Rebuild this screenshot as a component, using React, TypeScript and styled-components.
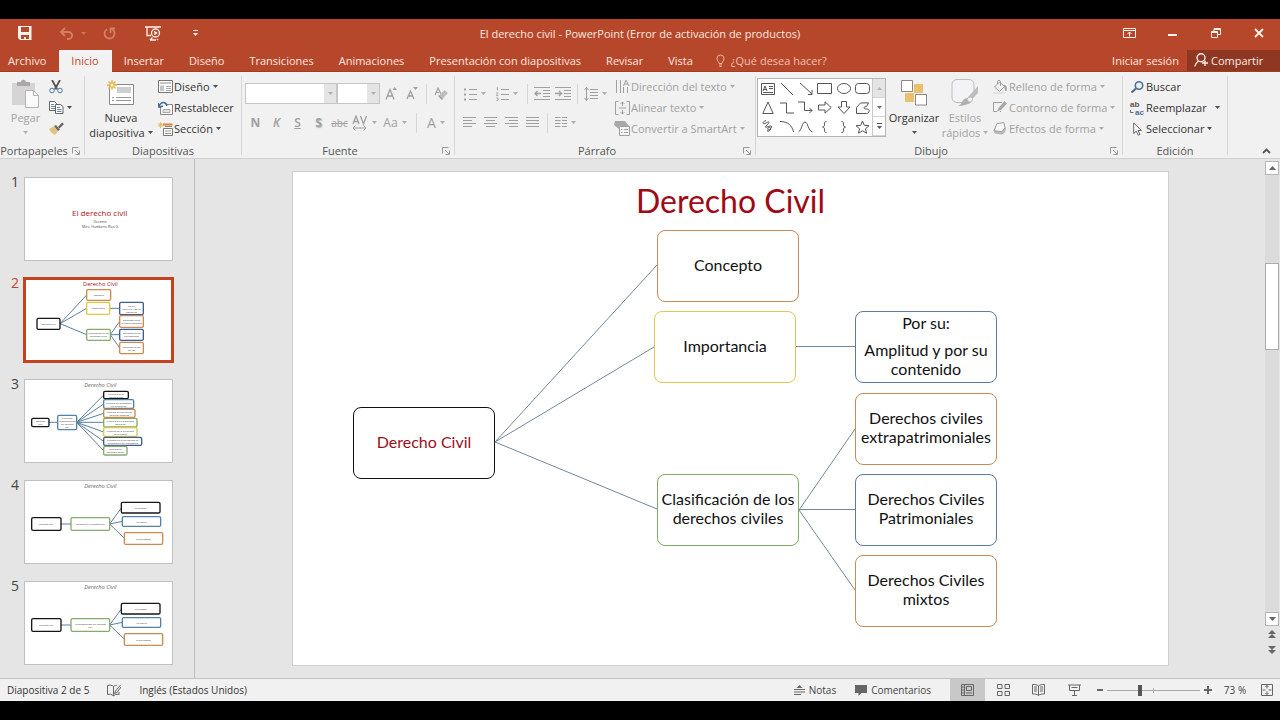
import React from "react";
import styled, { createGlobalStyle, css } from "styled-components";

const GlobalStyle = createGlobalStyle`
  *, *::before, *::after { box-sizing: border-box; }
  body {
    margin: 0;
    background: #000;
    font-family: "Open Sans", "Noto Sans", sans-serif;
    font-size: 11px;
    color: #333;
  }
  button, input, select { font: inherit; color: inherit; }
  button { border: 0; padding: 0; margin: 0; background: none; cursor: pointer; }
  svg { display: block; flex: none; }
`;

/* ---------- frame ---------- */

const Screen = styled.div`
  display: flex;
  flex-direction: column;
  height: 100vh;
  padding: 19px 0;
  background: #000;
  overflow: hidden;
`;

const TitleBar = styled.header`
  display: grid;
  grid-template-columns: 1fr auto 1fr;
  align-items: center;
  height: 28px;
  flex: none;
  background: #b7472a;
  color: #fbe9e2;
`;

const QuickAccess = styled.div`
  display: flex;
  align-items: center;
  padding-left: 8px;
`;

const QuickButton = styled.button<{ $width: number; $dim?: boolean }>`
  display: flex;
  align-items: center;
  justify-content: center;
  gap: 7px;
  width: ${(p) => p.$width}px;
  height: 24px;
  color: ${(p) => (p.$dim ? "#d47f68" : "#fff3ec")};
`;

const WindowTitle = styled.h1`
  margin: 0;
  padding-top: 1px;
  font-size: 11px;
  font-weight: 400;
  white-space: nowrap;
`;

const WindowButtons = styled.div`
  display: flex;
  justify-content: flex-end;
`;

const WindowButton = styled.button`
  display: flex;
  align-items: center;
  justify-content: center;
  width: 43px;
  height: 28px;
  color: #fff3ec;
`;

const TabBar = styled.nav`
  display: flex;
  height: 25px;
  flex: none;
  padding-top: 3px;
  background: #b7472a;
  border-bottom: 1px solid #a03c22;
  color: #fbe9e2;
`;

const Tab = styled.button<{ $active?: boolean; $first?: boolean }>`
  height: 21px;
  padding: 0 13px 1px 12px;
  white-space: nowrap;
  ${(p) => p.$first && css`padding-left: 8px;`}
  ${(p) => p.$active && css`height: 22px; padding-bottom: 2px; background: #f3f2f2; color: #c04a2c;`}
`;

const TellMe = styled.label`
  display: flex;
  align-items: center;
  gap: 6px;
  padding: 0 0 1px 10px;
  color: #e9b5a4;
`;

const TellMeInput = styled.input`
  width: 120px;
  padding: 0;
  border: 0;
  outline: 0;
  background: none;
  &::placeholder { color: #eec0b1; opacity: 1; }
`;

const Account = styled.div`
  display: flex;
  margin-left: auto;
`;

const SignIn = styled.button`
  padding: 0 8px 1px;
  white-space: nowrap;
`;

const Share = styled.button`
  display: flex;
  align-items: center;
  gap: 3px;
  width: 93px;
  padding: 0 0 1px 7px;
  background: #8e3823;
`;

/* ---------- ribbon ---------- */

const Ribbon = styled.section`
  display: flex;
  height: 87px;
  flex: none;
  background: #f1f1f1;
  border-bottom: 1px solid #cfcfcf;
  overflow: hidden;
`;

const Group = styled.div<{ $width: number }>`
  display: flex;
  flex-direction: column;
  flex: none;
  width: ${(p) => p.$width}px;
  padding-top: 4px;
`;

const GroupDivider = styled.div`
  width: 1px;
  margin: 4px 0 3px;
  flex: none;
  background: #d6d6d6;
`;

const GroupBody = styled.div<{ $pad?: number }>`
  display: flex;
  flex: 1;
  padding-left: ${(p) => p.$pad ?? 0}px;
`;

const GroupFooter = styled.div`
  display: flex;
  align-items: center;
  height: 15px;
  color: #555;
`;

const GroupName = styled.span`
  flex: 1;
  text-align: center;
  line-height: 15px;
`;

const Launcher = styled.button`
  display: flex;
  justify-content: center;
  width: 16px;
  color: #999;
`;

const Stack = styled.div<{ $top?: number; $gap?: number; $left?: number }>`
  display: flex;
  flex-direction: column;
  padding-top: ${(p) => p.$top ?? 0}px;
  margin-left: ${(p) => p.$left ?? 0}px;
  gap: ${(p) => p.$gap ?? 0}px;
`;

const Row = styled.div`
  display: flex;
  align-items: center;
  height: 21px;
`;

const BigButton = styled.button<{ $width: number; $dim?: boolean }>`
  display: flex;
  flex-direction: column;
  align-items: center;
  justify-content: flex-start;
  width: ${(p) => p.$width}px;
  height: 67px;
  line-height: 15px;
  white-space: nowrap;
  color: ${(p) => (p.$dim ? "#a3a3a3" : "#333")};
`;

const BigIcon = styled.span`
  display: flex;
  align-items: center;
  justify-content: center;
  height: 34px;
`;

const LabelLine = styled.span`
  display: flex;
  align-items: center;
  justify-content: center;
  gap: 3px;
  height: 15px;
`;

const SmallButton = styled.button<{ $dim?: boolean; $spread?: boolean }>`
  display: flex;
  align-items: center;
  gap: ${(p) => (p.$spread ? 8 : 3)}px;
  height: 21px;
  padding-left: 1px;
  white-space: nowrap;
  color: ${(p) => (p.$dim ? "#a0a0a0" : "#333")};
`;

const SmallLabel = styled.span`
  display: flex;
  align-items: center;
  gap: 1px;
`;

const IconSlot = styled.span`
  display: flex;
  align-items: center;
  justify-content: center;
  width: 16px;
  height: 16px;
`;

const Tool = styled.button<{ $width?: number }>`
  display: flex;
  align-items: center;
  justify-content: center;
  gap: 4px;
  width: ${(p) => p.$width ?? 21}px;
  height: 21px;
  color: #a0a0a0;
`;

const ToolDivider = styled.span`
  width: 1px;
  height: 20px;
  margin: 0 3px 0 4px;
  background: #d6d6d6;
`;

const Glyph = styled.span<{ $kind?: "bold" | "italic" | "underline" | "shadow" | "strike" | "large" }>`
  font-size: 12px;
  ${(p) => p.$kind === "bold" && css`font-weight: 700;`}
  ${(p) => p.$kind === "italic" && css`font-style: italic; font-weight: 600;`}
  ${(p) => p.$kind === "underline" && css`text-decoration: underline; font-weight: 600;`}
  ${(p) => p.$kind === "shadow" && css`font-weight: 700; text-shadow: 1px 1px 1px #bbb;`}
  ${(p) => p.$kind === "strike" && css`font-size: 10px; text-decoration: line-through;`}
  ${(p) => p.$kind === "large" && css`font-size: 14px;`}
`;

const Combo = styled.label<{ $width: number }>`
  display: flex;
  position: relative;
  width: ${(p) => p.$width}px;
  height: 21px;
  border: 1px solid #c6c6c6;
  background: linear-gradient(to left, #e4e4e4 12px, #fff 12px);
  color: #a6a6a6;
`;

const ComboSelect = styled.select`
  flex: 1;
  min-width: 0;
  appearance: none;
  border: 0;
  outline: 0;
  background: none;
`;

const ComboCaret = styled.span`
  position: absolute;
  right: 3px;
  top: 8px;
  pointer-events: none;
`;

const Gallery = styled.div`
  display: flex;
  height: 59px;
  margin: 2px 0 0 1px;
  border: 1px solid #b5b5b5;
  background: #fff;
  color: #555;
`;

const ShapeGrid = styled.div`
  display: grid;
  grid-template-columns: repeat(6, 19px);
  grid-auto-rows: 19px;
`;

const ShapeButton = styled.button`
  display: flex;
  align-items: center;
  justify-content: center;
`;

const GalleryScroll = styled.div`
  display: grid;
  grid-template-rows: repeat(3, 19px);
  width: 13px;
  border-left: 1px solid #c9c9c9;
`;

const GalleryArrow = styled.button<{ $off?: boolean }>`
  display: flex;
  align-items: center;
  justify-content: center;
  border-bottom: 1px solid #d5d5d5;
  background: ${(p) => (p.$off ? "#e4e4e4" : "#fff")};
  color: ${(p) => (p.$off ? "#b5b5b5" : "#555")};
`;

const Collapse = styled.button`
  align-self: flex-end;
  margin: 0 9px 0 auto;
  height: 14px;
  color: #555;
`;

/* ---------- workspace ---------- */

const Workspace = styled.main`
  display: flex;
  flex: 1;
  min-height: 0;
  background: #e6e5e6;
`;

const ThumbPanel = styled.ol`
  display: flex;
  flex-direction: column;
  gap: 17px;
  flex: none;
  width: 195px;
  margin: 0;
  padding: 18px 0 0;
  list-style: none;
  border-right: 1px solid #bdbdbd;
  overflow: hidden;
`;

const ThumbItem = styled.li<{ $selected?: boolean }>`
  display: flex;
  height: 84px;
  flex: none;
  color: ${(p) => (p.$selected ? "#c0492b" : "#444")};
`;

const ThumbNumber = styled.span`
  width: 24px;
  padding-left: 11px;
  font-size: 14px;
  line-height: 10px;
`;

const ThumbButton = styled.button<{ $selected?: boolean }>`
  width: 149px;
  height: 84px;
  background: #fff;
  border: 1px solid ${(p) => (p.$selected ? "#c5421f" : "#c0c0c0")};
  ${(p) => p.$selected && css`box-shadow: 0 0 0 1px #c5421f, inset 0 0 0 1px #c5421f;`}
`;

const Stage = styled.div`
  display: flex;
  align-items: center;
  justify-content: center;
  flex: 1;
  min-width: 0;
  padding-left: 1px;
  overflow: hidden;
`;

const Slide = styled.article`
  position: relative;
  flex: none;
  width: 875px;
  height: 493px;
  background: #fff;
  box-shadow: 0 0 0 1px #d0d0d0;
  font-family: Lato, "Liberation Sans", sans-serif;
  color: #111;
`;

const SlideTitle = styled.h2`
  margin: 0;
  padding-top: 9px;
  font-size: 32px;
  line-height: 40px;
  font-weight: 400;
  text-align: center;
  color: #a00a14;
`;

const Connectors = styled.svg`
  position: absolute;
  left: 0;
  top: 0;
`;

const Node = styled.div<{ $x: number; $y: number; $color: string; $red?: boolean }>`
  position: absolute;
  left: ${(p) => p.$x}px;
  top: ${(p) => p.$y}px;
  display: flex;
  flex-direction: column;
  align-items: center;
  justify-content: center;
  width: 142px;
  height: 72px;
  padding-bottom: 4px;
  border: 1px solid ${(p) => p.$color};
  border-radius: 8px;
  background: #fff;
  color: ${(p) => (p.$red ? "#98101c" : "#111")};
  font-size: 16px;
  line-height: 19px;
  text-align: center;
  white-space: nowrap;
`;

const NodeLead = styled.span`
  margin-bottom: 8px;
`;

const ScrollBar = styled.div`
  display: flex;
  flex-direction: column;
  flex: none;
  width: 14px;
  margin: 2px 1px 20px 0;
`;

const ScrollArrow = styled.button<{ $plain?: boolean }>`
  display: flex;
  align-items: center;
  justify-content: center;
  height: 14px;
  flex: none;
  color: #666;
  ${(p) => !p.$plain && css`border: 1px solid #b5b5b5; background: #fff;`}
  ${(p) => p.$plain && css`height: 16px;`}
`;

const ScrollTrack = styled.div`
  display: flex;
  flex-direction: column;
  flex: 1;
  padding-top: 88px;
  background: #dcdbdc;
`;

const ScrollThumb = styled.button`
  height: 87px;
  border: 1px solid #ababab;
  background: #fff;
`;

/* ---------- status bar ---------- */

const StatusBar = styled.footer`
  display: flex;
  align-items: stretch;
  height: 23px;
  flex: none;
  padding-left: 7px;
  background: #f1f1f1;
  border-top: 1px solid #c2c2c2;
  color: #333;
  font-size: 10px;
`;

const StatusText = styled.span`
  display: flex;
  align-items: center;
  white-space: nowrap;
`;

const StatusButton = styled.button<{ $width?: number; $active?: boolean; $left?: number }>`
  display: flex;
  align-items: center;
  justify-content: center;
  ${(p) => p.$width && css`width: ${p.$width}px;`}
  margin-left: ${(p) => p.$left ?? 0}px;
  gap: 4px;
  background: ${(p) => (p.$active ? "#c8c8c8" : "transparent")};
  color: #444;
  svg { color: #666; }
`;

const StatusEnd = styled.div`
  display: flex;
  margin-left: auto;
`;

const ZoomRange = styled.input`
  width: 93px;
  height: 22px;
  margin: 0;
  appearance: none;
  background:
    linear-gradient(#a8a8a8, #a8a8a8) 50% 50% / 1px 5px no-repeat,
    linear-gradient(#a8a8a8, #a8a8a8) 50% 50% / 100% 1px no-repeat;
  &::-webkit-slider-thumb {
    appearance: none;
    width: 4px;
    height: 11px;
    background: #555;
  }
`;

/* ---------- icons ---------- */

type IconProps = { w: number; h: number; children: React.ReactNode; sw?: number };
const Icon = ({ w, h, children, sw = 1 }: IconProps) => (
  <svg width={w} height={h} viewBox={`0 0 ${w} ${h}`} fill="none" stroke="currentColor" strokeWidth={sw} aria-hidden="true">
    {children}
  </svg>
);

const Caret = () => (
  <Icon w={5} h={3}><path d="M0 0h5L2.500 3z" fill="currentColor" stroke="none" opacity=".85" /></Icon>
);
const CaretUp = () => (
  <Icon w={7} h={4}><path d="M0 4h7L3.500 0z" fill="currentColor" stroke="none" /></Icon>
);
const CaretDown = () => (
  <Icon w={7} h={4}><path d="M0 0h7L3.500 4z" fill="currentColor" stroke="none" /></Icon>
);
const LauncherIcon = () => (
  <Icon w={8} h={8}><path d="M.5 6.500v-6h6M3 3l4 4M7.500 3.500v4h-4" /></Icon>
);
const SaveIcon = () => (
  <Icon w={14} h={14}>
    <path d="M0 .5A.5.5 0 0 1 .5 0h13v14H2l-2-2z" fill="currentColor" stroke="none" />
    <path d="M3 1h8v5H3zM3 9h8v4H3z" fill="#b7472a" stroke="none" />
    <path d="M6 11h2v2H6z" fill="currentColor" stroke="none" />
  </Icon>
);
const UndoIcon = () => (
  <Icon w={15} h={13} sw={1.8}><path d="M6 1 2 5l4 4M2.500 5H9c6 0 5 7 0 7H8" /></Icon>
);
const RedoIcon = () => (
  <Icon w={13} h={13} sw={1.8}><path d="M4 2.200A5 5 0 1 0 9.500 2.500M7.500 6V1.500H12" /></Icon>
);
const PresentIcon = () => (
  <Icon w={16} h={15} sw={1.3}>
    <path d="M0 1h16M2 1v8.500h4M5 14l2.500-2.500M11 14h-6M12 13l1 1" />
    <circle cx="10.500" cy="7" r="4" />
    <path d="M9.300 4.800v4.400L12.800 7z" fill="currentColor" stroke="none" />
  </Icon>
);
const CustomizeIcon = () => (
  <Icon w={5} h={6}><path d="M0 .5h5" /><path d="M0 3h5L2.500 6z" fill="currentColor" stroke="none" /></Icon>
);
const RibbonOptionsIcon = () => (
  <Icon w={13} h={10}><path d="M.5.5h12v9H.5zM.5 2.500h12M6.500 8.500V4M4.500 6l2-2 2 2" /></Icon>
);
const MinimizeIcon = () => <Icon w={9} h={6}><path d="M0 4h9v2H0z" fill="currentColor" stroke="none" /></Icon>;
const RestoreIcon = () => (
  <Icon w={10} h={10}><path d="M.5 3.500h6v6h-6zM.5 4.500h6M3 3V.5h6.500v6H7M3 1.500h6.500" /></Icon>
);
const CloseIcon = () => <Icon w={10} h={10} sw={1.8}><path d="m1 1 8 8M9 1 1 9" /></Icon>;
const BulbIcon = () => (
  <Icon w={9} h={13}>
    <path d="M3 9.500C3 7.500 1 7 1 4.500a3.500 3.500 0 0 1 7 0C8 7 6 7.500 6 9.500zM3 11h3M3.500 12.500h2" />
  </Icon>
);
const PersonIcon = () => (
  <Icon w={14} h={14} sw={1.4}>
    <circle cx="7" cy="4.800" r="4" /><path d="M4.500 8C2.500 9.500 1 11 .8 13.500M8 10h6M11 7.500V13" />
  </Icon>
);
const PasteIcon = () => (
  <Icon w={27} h={29}>
    <path d="M0 4h23v8H13v14H0z" fill="#d6d4d4" stroke="none" />
    <path d="M5 3h4c0-3 5-3 5 0h4v4H5z" fill="#a9a9a9" stroke="none" />
    <path d="M13.500 11.500h8l5 5v12h-13z" fill="#fafafa" stroke="#b4b4b4" />
    <path d="M21.500 11.500v5h5" stroke="#b4b4b4" />
  </Icon>
);
const CutIcon = () => (
  <Icon w={14} h={14}>
    <path d="m3 0 5 9M11 0 6 9" stroke="#555" strokeWidth="1.800" />
    <circle cx="3" cy="10.500" r="2.300" stroke="#53789c" /><circle cx="11" cy="10.500" r="2.300" stroke="#53789c" />
    <path d="M5 9h4" stroke="#53789c" />
  </Icon>
);
const CopyIcon = () => (
  <Icon w={15} h={13}>
    <path d="M.5.5h5l2 2v7h-7z" fill="#fff" stroke="#666" /><path d="M2 3.500h3M2 5.500h4M2 7.500h4" stroke="#5f85a8" />
    <path d="M6.500 3.500h5l2.500 2v7H6.500z" fill="#fff" stroke="#666" /><path d="M8 6.500h3M8 8.500h4.500M8 10.500h4.500" stroke="#5f85a8" />
  </Icon>
);
const BrushIcon = () => (
  <Icon w={15} h={13}>
    <path d="m0 7 5-3 4 5-3 4c-2-1-5-3-6-6z" fill="#e2c47c" stroke="none" />
    <path d="m5 4 2-1 4 4.500L9 9z" fill="#6b6b6b" stroke="none" />
    <path d="m9 5 4-4.500L15 2l-4.500 4.500z" fill="#666" stroke="none" />
  </Icon>
);
const Burst = () => (
  <g stroke="#e6ba4e" strokeWidth="1.400">
    <circle cx="5" cy="5" r="2.200" fill="#fdf4d4" />
    <path d="M5 0v2M5 8v2M0 5h2M8 5h2M1.500 1.500 3 3M7 7l1.500 1.500M8.500 1.500 7 3M3 7 1.500 8.500" />
  </g>
);
const NewSlideIcon = () => (
  <Icon w={28} h={27}>
    <path d="M2.500 4.500h24v20h-24z" fill="#fff" stroke="#888" />
    <path d="M10 7h14v6H10z" fill="#cfcfcf" stroke="none" />
    <path d="M5 17.500h2M9 17.500h15M5 20.500h2M9 20.500h15" stroke="#999" />
    <Burst />
  </Icon>
);
const LayoutIcon = () => (
  <Icon w={15} h={13}>
    <path d="M.5.5h14v12H.5z" fill="#fff" stroke="#777" /><path d="M2 2h11v2H2zM2 5.500h4V11H2z" fill="#c4c4c4" stroke="none" />
    <path d="M8 6.500h5M8 8.500h5M8 10.500h5" stroke="#aaa" />
  </Icon>
);
const ResetIcon = () => (
  <Icon w={15} h={14}>
    <path d="M2.500 6v7.500h12v-10H9" fill="#fff" stroke="#888" /><path d="M5 8.500h7v3H5z" fill="#e2e2e2" stroke="#aaa" />
    <path d="M1 5.500C3 0 8 .5 9 5M0 2l1 4 4-.8" stroke="#426b99" strokeWidth="1.600" />
  </Icon>
);
const SectionIcon = () => (
  <Icon w={15} h={14}>
    <path d="M5 2.500h9.500" stroke="#d9823a" strokeWidth="2" /><path d="M5.500 6.500h9v7h-9z" fill="#fff" stroke="#777" />
    <path d="M7 9h6M7 11.500h6" stroke="#999" /><path d="M7 4.500h7" stroke="#888" />
    <path d="M2.500 0v6M0 3h5M.8 1l3.400 4M4.200 1 .8 5" stroke="#e6ba4e" strokeWidth=".9" />
  </Icon>
);
const GrowIcon = ({ down }: { down?: boolean }) => (
  <Icon w={12} h={13} sw={1.3}>
    {down ? <path d="m1 12 3.500-8L8 12M2.500 9h4" /> : <path d="M1 12.500 5 2.500l4 10M2.500 9h5" />}
    {down ? <path d="M7 0h5L9.500 3z" fill="currentColor" stroke="none" /> : <path d="M7.500 3h4.500L9.700 0z" fill="currentColor" stroke="none" />}
  </Icon>
);
const ClearFormatIcon = () => (
  <Icon w={14} h={13} sw={1.2}>
    <path d="m1 8 3-7 3 6M2.200 5.500h3" /><path d="m5 8.500 5.500-5.500 3.500 3-5.500 6H6.500z" fill="#bfbfbf" stroke="none" /><path d="m4.500 8.500 4 4" />
  </Icon>
);
const SpacingAVIcon = () => (
  <Icon w={16} h={16}>
    <path d="m1 9 3-8 3 8M2 6.500h4M8.500 1l3 8 3-8" strokeWidth="1.300" /><path d="M1 13h13M3.500 10.500 1 13l2.500 2.500M11.500 10.500 14 13l-2.500 2.500" />
  </Icon>
);
const BulletsIcon = ({ numbered }: { numbered?: boolean }) => (
  <Icon w={13} h={14}>
    <path d="M5 2.500h8M5 7.500h8M5 12.500h8" />
    {numbered ? (
      <path d="M.5 1 1.500.5v3M.3 6h1.700L.5 8.500H2.300M.3 11h2l-1 1 1 .5-.5 1H.3" strokeWidth=".9" />
    ) : (
      <path d="M0 1.500h2v2H0zM0 6.500h2v2H0zM0 11.500h2v2H0z" fill="currentColor" stroke="none" />
    )}
  </Icon>
);
const IndentIcon = ({ right }: { right?: boolean }) => (
  <Icon w={16} h={13}>
    <path d="M0 .5h16M9 3.500h7M9 6.500h7M9 9.500h7M0 12.500h16" />
    <path d={right ? "M0 6.500h6M4 4l2.500 2.500L4 9" : "M7 6.500H1M3.500 4 1 6.500 3.500 9"} strokeWidth="1.400" />
  </Icon>
);
const LineSpacingIcon = () => (
  <Icon w={14} h={14}>
    <path d="M6 2.500h8M6 5.500h8M6 8.500h8M6 11.500h8" /><path d="M2.500 0v14M.5 3l2-2.500L4.500 3M.5 11l2 2.500 2-2.500" />
  </Icon>
);
const AlignIcon = ({ kind }: { kind: "left" | "center" | "right" | "justify" }) => {
  const short = { left: [0, 9], center: [2, 11], right: [4, 13], justify: [0, 13] }[kind];
  return (
    <Icon w={13} h={11}>
      <path d={`M0 .5h13M${short[0]} 3.500H${short[1]}M0 6.500h13M${short[0]} 9.500H${short[1]}`} />
    </Icon>
  );
};
const ColumnsIcon = () => (
  <Icon w={12} h={11}><path d="M0 .5h5.500M0 3.500h5.500M0 6.500h5.500M0 9.500h5.500M7 .5h5M7 3.500h5M7 6.500h5M7 9.500h5" /></Icon>
);
const TextDirIcon = () => (
  <Icon w={15} h={15}><path d="M1.500 1v13M5.500 1v13M8.500 8v6M12.500 8v6M8.500 7l2.500-6 3 6M9.500 5h3.500" /></Icon>
);
const AlignTextIcon = () => (
  <Icon w={15} h={14}>
    <path d="M3.500.5h-3v13h3M11.500.5h3v13h-3M4 7h7" /><path d="M7.500 1v4M5.500 3l2-2 2 2M7.500 13V9M5.500 11l2 2 2-2" />
  </Icon>
);
const SmartArtIcon = () => (
  <Icon w={16} h={15}>
    <path d="M1 0h10l4 5H5v3L0 4z" fill="#a8a8a8" stroke="none" /><path d="M5.500 5.500h10v9h-10z" fill="#f5f5f5" />
    <path d="M7 8.500h1.500M10 8.500h4M7 11.500h1.500M10 11.500h4" />
  </Icon>
);
const ArrangeIcon = () => (
  <Icon w={27} h={26}>
    <path d="M13 4h9v9h-9zM4 13h9v9H4z" fill="#eac06c" stroke="none" />
    <path d="M.5.5h11v11H.5zM14.500 14.500h11v10.500h-11z" fill="#fff" stroke="#888" />
  </Icon>
);
const StylesIcon = () => (
  <Icon w={28} h={29}>
    <path d="M6 .5h12a5 5 0 0 1 5 5v12l-5 6H6a5 5 0 0 1-5-5v-13a5 5 0 0 1 5-5z" fill="#f3f3f6" stroke="#bcbcbc" />
    <path d="M27 7v7l-7 7-3-3z" fill="#bdbdbd" stroke="none" /><path d="M19 19c3 3 0 6-2 6-3 1-6 2-10 2 2-1 3-2 4-4s4-5 8-4z" fill="#b0b0b0" stroke="none" />
    <circle cx="19" cy="20.500" r="2.500" fill="#f3f3f3" stroke="#bdbdbd" />
  </Icon>
);
const FillIcon = () => (
  <Icon w={14} h={14}>
    <path d="m1.500 7 5-5 5 4.500-5 5zM4.500 4V1.500c0-1.500 3-1.500 3 0V6" /><path d="M11.500 5c2 1 2 3 1.500 6-1-1-1-3-1.500-6z" fill="#a8a8a8" />
    <path d="M0 12h12v2H0z" fill="#e6e3de" stroke="none" />
  </Icon>
);
const OutlineIcon = () => (
  <Icon w={14} h={13}>
    <path d="M9 1.500H.5v9H4M7 10.500h1" /><path d="m11.500 0 2.500 2.500L8 9l-4 1.500L5.500 7z" fill="#a8a8a8" stroke="none" />
  </Icon>
);
const EffectsIcon = () => (
  <Icon w={14} h={13}>
    <path d="m4 1.500 7-1 2 7-1.500 3.500-3 1.500-7-1-1-3z" fill="#b8b8b8" stroke="none" /><path d="m4 1.500 7-.8 1 5-3 4-8-1z" fill="#f7f7f7" />
  </Icon>
);
const FindIcon = () => (
  <Icon w={13} h={12}><circle cx="8" cy="4.500" r="3.700" stroke="#4b6d9b" strokeWidth="1.600" /><path d="m5 7.500-4.500 4" stroke="#4b6d9b" strokeWidth="2.200" /></Icon>
);
const ReplaceIcon = () => (
  <svg width="16" height="18" viewBox="0 0 16 18" fontFamily="Liberation Sans, sans-serif" fontSize="8" fontWeight="700" aria-hidden="true">
    <text x="1" y="8" fill="#555">ab</text>
    <text x="6" y="16" fill="#4b6d9b">ac</text>
    <path d="M1.500 11v2.500h3" fill="none" stroke="#4b6d9b" />
  </svg>
);
const CursorIcon = () => (
  <Icon w={9} h={14}><path d="M.7 1v10.500l2.600-2.300 2 4 1.700-.8-2-3.900h3.500z" fill="#fff" stroke="#666" /></Icon>
);
const ChevronUp = () => <Icon w={9} h={6} sw={1.8}><path d="m1 5 3.500-3.500L8 5" /></Icon>;

const shapes: [string, React.ReactNode][] = [
  ["Cuadro de texto", <Icon w={14} h={12}><path d="M.5.5h13v11H.5zM2 8l2-5 2 5M3 6.500h2M8 3.500h4M8 5.500h4M2 9.500h10" /></Icon>],
  ["Línea", <Icon w={14} h={12}><path d="m1 0 12 12" /></Icon>],
  ["Flecha", <Icon w={14} h={12}><path d="m1 0 12 11M13 7v4.500H9" /></Icon>],
  ["Rectángulo", <Icon w={15} h={11}><path d="M.5.5h14v10H.5z" /></Icon>],
  ["Elipse", <Icon w={14} h={11}><ellipse cx="7" cy="5.500" rx="6.500" ry="5" /></Icon>],
  ["Rectángulo redondeado", <Icon w={15} h={11}><rect x=".5" y=".5" width="14" height="10" rx="3" /></Icon>],
  ["Triángulo", <Icon w={12} h={13}><path d="M6 1 .8 12.500h10.400z" /></Icon>],
  ["Conector angular", <Icon w={14} h={12}><path d="M0 1h6.500v10H14" /></Icon>],
  ["Conector con flecha", <Icon w={15} h={13}><path d="M0 1h6.500v8.500H14M11.500 7l2.500 2.500-2.500 2.500" /></Icon>],
  ["Flecha derecha", <Icon w={14} h={13}><path d="M.5 4H7V.8l6.200 5.700L7 12.200V9H.5z" /></Icon>],
  ["Flecha abajo", <Icon w={14} h={13}><path d="M4.500.5h5V6h3.500l-6 6.500L1 6h3.500z" /></Icon>],
  ["Forma libre", <Icon w={14} h={12}><path d="M4.500 1 .5 5.500v6h10c3 0 4-4.500 0-4.500-3 0-4-2 0-2.500L12.500.8z" /></Icon>],
  ["Garabato", <Icon w={11} h={13}><path d="M4 .5C-1 2 1 5 4 3s4-1 2 1-4 4-1 3 6-2 4 1-4 2-3 0 4 0 2 2-3 2-2 0" /></Icon>],
  ["Arco", <Icon w={14} h={11}><path d="M0 .5c8 0 12 4 13.500 10.500" /></Icon>],
  ["Curva", <Icon w={15} h={12}><path d="M.5 11C4 9 4 1 7 1s3 9 7.500 10" /></Icon>],
  ["Llave izquierda", <Icon w={5} h={12}><path d="M4.500.5c-4 0 0 5-4 5.500 4 .5 0 5.500 4 5.500" /></Icon>],
  ["Llave derecha", <Icon w={5} h={12}><path d="M.5.500c4 0 0 5 4 5.500-4 .5 0 5.500-4 5.500" /></Icon>],
  ["Estrella", <Icon w={15} h={14}><path d="m7.500 1 1.800 4.300 4.700.4-3.500 3 1 4.500-4-2.400-4 2.400 1-4.500-3.500-3 4.700-.4z" /></Icon>],
];

/* ---------- slide thumbnails ---------- */

type Box = { x: number; y: number; w: number; h: number; c: string; t: string[] };
type Mini = { title: string; red?: boolean; boxes: Box[]; lines: number[][] };

const black = "#161616";
const blue = "#5580a8";
const orange = "#cc8a4e";
const yellow = "#dcc845";
const green = "#86ab6c";

const fan = (x: number, y: number, ends: number[][]) => ends.map(([a, b]) => [x, y, a, b]);

const threeWay = (middle: string[]): Mini => ({
  title: "Derecho Civil",
  boxes: [
    { x: 20, y: 110, w: 88, h: 38, c: black, t: ["Derecho Civil"] },
    { x: 138, y: 110, w: 116, h: 38, c: green, t: middle },
    { x: 289, y: 64, w: 116, h: 32, c: black, t: ["La persona"] },
    { x: 292, y: 107, w: 115, h: 29, c: blue, t: ["La familia"] },
    { x: 298, y: 155, w: 115, h: 35, c: orange, t: ["El patrimonio"] },
  ],
  lines: [[108, 129, 138, 129], ...fan(254, 129, [[289, 81], [292, 121], [298, 172]])],
});

const minis: Mini[] = [
  {
    title: "Derecho Civil",
    red: true,
    boxes: [
      { x: 36, y: 118, w: 69, h: 33, c: black, t: ["Derecho Civil"] },
      { x: 185, y: 32, w: 72, h: 32, c: orange, t: ["Concepto"] },
      { x: 185, y: 70, w: 69, h: 36, c: yellow, t: ["Importancia"] },
      { x: 284, y: 70, w: 71, h: 37, c: "#3f5c93", t: ["Por su:", "Amplitud y por su", "contenido"] },
      { x: 284, y: 110, w: 71, h: 35, c: orange, t: ["Derechos civiles", "extrapatrimoniales"] },
      { x: 185, y: 151, w: 71, h: 33, c: green, t: ["Clasificación de los", "derechos civiles"] },
      { x: 284, y: 151, w: 71, h: 33, c: "#3f5c93", t: ["Derechos Civiles", "Patrimoniales"] },
      { x: 284, y: 190, w: 71, h: 34, c: orange, t: ["Derechos Civiles", "mixtos"] },
    ],
    lines: [
      ...fan(105, 134, [[185, 48], [185, 88], [185, 167]]),
      [254, 88, 284, 88],
      ...fan(256, 167, [[284, 127], [284, 167], [284, 207]]),
    ],
  },
  {
    title: "Derecho Civil",
    boxes: [
      { x: 20, y: 115, w: 52, h: 25, c: black, t: ["Derecho", "Civil"] },
      { x: 98, y: 106, w: 57, h: 43, c: blue, t: ["Principios", "fundamentales", "del derecho", "civil"] },
      { x: 236, y: 34, w: 74, h: 22, c: black, t: ["Principio de la", "personalidad"] },
      { x: 236, y: 59, w: 90, h: 26, c: blue, t: ["Principio de autonomía", "de la voluntad"] },
      { x: 236, y: 88, w: 94, h: 24, c: orange, t: ["Principio de libertad de", "estipular negocios"] },
      { x: 236, y: 115, w: 100, h: 26, c: green, t: ["Principio de la propiedad", "individual"] },
      { x: 236, y: 143, w: 100, h: 26, c: yellow, t: ["Principio de la integridad", "de la familia"] },
      { x: 236, y: 172, w: 114, h: 24, c: "#3f5c93", t: ["Principio de la legitimidad de", "la herencia y del testamento"] },
      { x: 236, y: 199, w: 70, h: 26, c: green, t: ["Principio de", "asistencia social"] },
    ],
    lines: [[72, 127, 98, 127], ...fan(155, 127, [[236, 45], [236, 72], [236, 100], [236, 127], [236, 156], [236, 184], [236, 212]])],
  },
  threeWay(["Derecho de la persona civil"]),
  threeWay(["La personalidad del derecho", "civil"]),
];

const MiniSlide = ({ mini }: { mini: Mini }) => (
  <svg width="147" height="82" viewBox="0 0 441 246" aria-hidden="true">
    <text x="226" y="22" fontSize="17" fill={mini.red ? "#98101c" : "#666"} fontStyle={mini.red ? "normal" : "italic"} textAnchor="middle">{mini.title}</text>
    {mini.lines.map(([a, b, c, d], i) => (
      <line key={i} x1={a} y1={b} x2={c} y2={d} stroke="#5d7f9f" strokeWidth="3" />
    ))}
    {mini.boxes.map((b, i) => (
      <g key={i}>
        <rect x={b.x} y={b.y} width={b.w} height={b.h} rx="4" fill="#fff" stroke={b.c} strokeWidth="4" />
        {b.t.map((line, k) => (
          <text key={k} x={b.x + b.w / 2} y={b.y + b.h / 2 + 3 + (k - (b.t.length - 1) / 2) * 9} fontSize="7" fill="#333" textAnchor="middle">{line}</text>
        ))}
      </g>
    ))}
  </svg>
);

const TitleMini = () => (
  <svg width="147" height="82" viewBox="0 0 441 246" aria-hidden="true">
    <text x="224" y="113" fontSize="24" fill="#b0101c" textAnchor="middle">El derecho civil</text>
    <text x="226" y="136" fontSize="10" fill="#444" textAnchor="middle">Docente:</text>
    <text x="226" y="150" fontSize="10" fill="#444" textAnchor="middle">Mtro. Humberto Ríos G.</text>
  </svg>
);

/* ---------- slide content ---------- */

const nodeOrange = "#c98a55";
const nodeBlue = "#62799f";
const nodes: { x: number; y: number; color: string; lines: string[]; lead?: string; red?: boolean }[] = [
  { x: 60, y: 235, color: "#111", lines: ["Derecho Civil"], red: true },
  { x: 364, y: 58, color: nodeOrange, lines: ["Concepto"] },
  { x: 361, y: 139, color: "#dcca55", lines: ["Importancia"] },
  { x: 364, y: 302, color: "#7fac67", lines: ["Clasificación de los", "derechos civiles"] },
  { x: 562, y: 139, color: nodeBlue, lead: "Por su:", lines: ["Amplitud y por su", "contenido"] },
  { x: 562, y: 221, color: nodeOrange, lines: ["Derechos civiles", "extrapatrimoniales"] },
  { x: 562, y: 302, color: nodeBlue, lines: ["Derechos Civiles", "Patrimoniales"] },
  { x: 562, y: 383, color: nodeOrange, lines: ["Derechos Civiles", "mixtos"] },
];

const tabs = ["Insertar", "Diseño", "Transiciones", "Animaciones", "Presentación con diapositivas", "Revisar", "Vista"];

const Small = ({ icon, label, caret, dim, spread }: { icon: React.ReactNode; label: string; caret?: boolean; dim?: boolean; spread?: boolean }) => (
  <SmallButton $dim={dim} $spread={spread}>
    <SmallLabel><IconSlot>{icon}</IconSlot>{label}</SmallLabel>
    {caret && <Caret />}
  </SmallButton>
);

const Footer = ({ name, launcher }: { name: string; launcher?: boolean }) => (
  <GroupFooter>
    <GroupName>{name}</GroupName>
    {launcher && <Launcher aria-label={`Opciones de ${name}`}><LauncherIcon /></Launcher>}
  </GroupFooter>
);

export default function App() {
  return (
    <Screen>
      <GlobalStyle />
      <TitleBar>
        <QuickAccess>
          <QuickButton aria-label="Guardar" $width={34}><SaveIcon /></QuickButton>
          <QuickButton aria-label="Deshacer" $dim $width={60}><UndoIcon /><Caret /></QuickButton>
          <QuickButton aria-label="Rehacer" $dim $width={14}><RedoIcon /></QuickButton>
          <QuickButton aria-label="Presentación desde el principio" $width={74}><PresentIcon /></QuickButton>
          <QuickButton aria-label="Personalizar barra" $width={10}><CustomizeIcon /></QuickButton>
        </QuickAccess>
        <WindowTitle>El derecho civil - PowerPoint (Error de activación de productos)</WindowTitle>
        <WindowButtons>
          <WindowButton aria-label="Opciones de la cinta"><RibbonOptionsIcon /></WindowButton>
          <WindowButton aria-label="Minimizar"><MinimizeIcon /></WindowButton>
          <WindowButton aria-label="Restaurar"><RestoreIcon /></WindowButton>
          <WindowButton aria-label="Cerrar"><CloseIcon /></WindowButton>
        </WindowButtons>
      </TitleBar>

      <TabBar>
        <Tab $first>Archivo</Tab>
        <Tab $active>Inicio</Tab>
        {tabs.map((t) => <Tab key={t}>{t}</Tab>)}
        <TellMe>
          <BulbIcon />
          <TellMeInput aria-label="¿Qué desea hacer?" placeholder="¿Qué desea hacer?" />
        </TellMe>
        <Account>
          <SignIn>Iniciar sesión</SignIn>
          <Share><PersonIcon />Compartir</Share>
        </Account>
      </TabBar>

      <Ribbon>
        <Group $width={84}>
          <GroupBody $pad={4}>
            <BigButton $width={43} $dim>
              <BigIcon><PasteIcon /></BigIcon>
              <LabelLine>Pegar</LabelLine>
              <LabelLine><Caret /></LabelLine>
            </BigButton>
            <Stack>
              <SmallButton aria-label="Cortar"><IconSlot><CutIcon /></IconSlot></SmallButton>
              <SmallButton aria-label="Copiar"><IconSlot><CopyIcon /></IconSlot><Caret /></SmallButton>
              <SmallButton aria-label="Copiar formato"><IconSlot><BrushIcon /></IconSlot></SmallButton>
            </Stack>
          </GroupBody>
          <Footer name="Portapapeles" launcher />
        </Group>
        <GroupDivider />
        <Group $width={156}>
          <GroupBody $pad={5}>
            <BigButton $width={62}>
              <BigIcon><NewSlideIcon /></BigIcon>
              <LabelLine>Nueva</LabelLine>
              <LabelLine>diapositiva<Caret /></LabelLine>
            </BigButton>
            <Stack $left={4}>
              <Small icon={<LayoutIcon />} label="Diseño" caret />
              <Small icon={<ResetIcon />} label="Restablecer" />
              <Small icon={<SectionIcon />} label="Sección" caret />
            </Stack>
          </GroupBody>
          <Footer name="Diapositivas" />
        </Group>
        <GroupDivider />
        <Group $width={212}>
          <GroupBody $pad={3}>
            <Stack $top={7} $gap={8}>
              <Row>
                <Combo $width={92}><ComboSelect aria-label="Fuente" /><ComboCaret><Caret /></ComboCaret></Combo>
                <Combo $width={43}><ComboSelect aria-label="Tamaño de fuente" /><ComboCaret><Caret /></ComboCaret></Combo>
                <Tool aria-label="Aumentar fuente"><GrowIcon /></Tool>
                <Tool aria-label="Disminuir fuente"><GrowIcon down /></Tool>
                <ToolDivider />
                <Tool aria-label="Borrar formato"><ClearFormatIcon /></Tool>
              </Row>
              <Row>
                <Tool aria-label="Negrita"><Glyph $kind="bold">N</Glyph></Tool>
                <Tool aria-label="Cursiva"><Glyph $kind="italic">K</Glyph></Tool>
                <Tool aria-label="Subrayado"><Glyph $kind="underline">S</Glyph></Tool>
                <Tool aria-label="Sombra"><Glyph $kind="shadow">S</Glyph></Tool>
                <Tool aria-label="Tachado"><Glyph $kind="strike">abc</Glyph></Tool>
                <Tool $width={28} aria-label="Espaciado"><SpacingAVIcon /><Caret /></Tool>
                <Tool $width={34} aria-label="Mayúsculas"><Glyph>Aa</Glyph><Caret /></Tool>
                <ToolDivider />
                <Tool $width={32} aria-label="Color de fuente"><Glyph $kind="large">A</Glyph><Caret /></Tool>
              </Row>
            </Stack>
          </GroupBody>
          <Footer name="Fuente" launcher />
        </Group>
        <GroupDivider />
        <Group $width={300}>
          <GroupBody $pad={4}>
            <Stack $top={7} $gap={8}>
              <Row>
                <Tool $width={32} aria-label="Viñetas"><BulletsIcon /><Caret /></Tool>
                <Tool $width={32} aria-label="Numeración"><BulletsIcon numbered /><Caret /></Tool>
                <ToolDivider />
                <Tool aria-label="Reducir sangría"><IndentIcon /></Tool>
                <Tool aria-label="Aumentar sangría"><IndentIcon right /></Tool>
                <ToolDivider />
                <Tool $width={28} aria-label="Interlineado"><LineSpacingIcon /><Caret /></Tool>
              </Row>
              <Row>
                <Tool aria-label="Alinear a la izquierda"><AlignIcon kind="left" /></Tool>
                <Tool aria-label="Centrar"><AlignIcon kind="center" /></Tool>
                <Tool aria-label="Alinear a la derecha"><AlignIcon kind="right" /></Tool>
                <Tool aria-label="Justificar"><AlignIcon kind="justify" /></Tool>
                <ToolDivider />
                <Tool $width={28} aria-label="Columnas"><ColumnsIcon /><Caret /></Tool>
              </Row>
            </Stack>
            <Stack $left={4}>
              <Small icon={<TextDirIcon />} label="Dirección del texto" caret dim />
              <Small icon={<AlignTextIcon />} label="Alinear texto" caret dim />
              <Small icon={<SmartArtIcon />} label="Convertir a SmartArt" caret dim />
            </Stack>
          </GroupBody>
          <Footer name="Párrafo" launcher />
        </Group>
        <GroupDivider />
        <Group $width={366}>
          <GroupBody>
            <Gallery>
              <ShapeGrid>
                {shapes.map(([name, icon]) => <ShapeButton key={name} aria-label={name}>{icon}</ShapeButton>)}
              </ShapeGrid>
              <GalleryScroll>
                <GalleryArrow $off aria-label="Subir"><Icon w={5} h={3}><path d="M0 3h5L2.500 0z" fill="currentColor" stroke="none" /></Icon></GalleryArrow>
                <GalleryArrow aria-label="Bajar"><Caret /></GalleryArrow>
                <GalleryArrow aria-label="Más formas"><CustomizeIcon /></GalleryArrow>
              </GalleryScroll>
            </Gallery>
            <BigButton $width={56}>
              <BigIcon><ArrangeIcon /></BigIcon>
              <LabelLine>Organizar</LabelLine>
              <LabelLine><Caret /></LabelLine>
            </BigButton>
            <BigButton $width={46} $dim>
              <BigIcon><StylesIcon /></BigIcon>
              <LabelLine>Estilos</LabelLine>
              <LabelLine>rápidos<Caret /></LabelLine>
            </BigButton>
            <Stack $left={3}>
              <Small icon={<FillIcon />} label="Relleno de forma" caret dim />
              <Small icon={<OutlineIcon />} label="Contorno de forma" caret dim />
              <Small icon={<EffectsIcon />} label="Efectos de forma" caret dim />
            </Stack>
          </GroupBody>
          <Footer name="Dibujo" launcher />
        </Group>
        <GroupDivider />
        <Group $width={104}>
          <GroupBody $pad={5}>
            <Stack>
              <Small icon={<FindIcon />} label="Buscar" />
              <Small icon={<ReplaceIcon />} label="Reemplazar" caret spread />
              <Small icon={<CursorIcon />} label="Seleccionar" caret />
            </Stack>
          </GroupBody>
          <Footer name="Edición" />
        </Group>
        <GroupDivider />
        <Collapse aria-label="Contraer la cinta"><ChevronUp /></Collapse>
      </Ribbon>

      <Workspace>
        <ThumbPanel>
          <ThumbItem>
            <ThumbNumber>1</ThumbNumber>
            <ThumbButton aria-label="Diapositiva 1"><TitleMini /></ThumbButton>
          </ThumbItem>
          {minis.map((m, i) => (
            <ThumbItem key={i} $selected={i === 0}>
              <ThumbNumber>{i + 2}</ThumbNumber>
              <ThumbButton $selected={i === 0} aria-label={`Diapositiva ${i + 2}`}><MiniSlide mini={m} /></ThumbButton>
            </ThumbItem>
          ))}
        </ThumbPanel>
        <Stage>
          <Slide>
            <SlideTitle>Derecho Civil</SlideTitle>
            <Connectors width="875" height="493" viewBox="0 0 875 493" stroke="#71889c" strokeWidth="1" aria-hidden="true">
              <path fill="none" d="M202 270 364 93M202 270l159-95M202 270l162 67M503 174.500h59M506 338l56-81M506 337.500h56M506 338l56 80" />
            </Connectors>
            {nodes.map((n, i) => (
              <Node key={i} $x={n.x} $y={n.y} $color={n.color} $red={n.red}>
                {n.lead && <NodeLead>{n.lead}</NodeLead>}
                {n.lines.map((l) => <span key={l}>{l}</span>)}
              </Node>
            ))}
          </Slide>
        </Stage>
        <ScrollBar>
          <ScrollArrow aria-label="Subir"><CaretUp /></ScrollArrow>
          <ScrollTrack><ScrollThumb aria-label="Desplazar" /></ScrollTrack>
          <ScrollArrow aria-label="Bajar"><CaretDown /></ScrollArrow>
          <ScrollArrow $plain aria-label="Diapositiva anterior">
            <Icon w={8} h={8}><path d="M4 0 0 4h8zM4 4 0 8h8z" fill="currentColor" stroke="none" /></Icon>
          </ScrollArrow>
          <ScrollArrow $plain aria-label="Diapositiva siguiente">
            <Icon w={8} h={8}><path d="M0 0h8L4 4zM0 4h8L4 8z" fill="currentColor" stroke="none" /></Icon>
          </ScrollArrow>
        </ScrollBar>
      </Workspace>

      <StatusBar>
        <StatusText>Diapositiva 2 de 5</StatusText>
        <StatusButton aria-label="Revisión ortográfica" $width={50}>
          <Icon w={14} h={13}><path d="M6.500 12V2.500C5 1 3 1 .5 1.500v9c2.500-.5 4-.5 6 1.500 1-1.500 3-2 5.500-1.500V8M6.500 2.500C7.500 1.500 9 1.200 10 1.300M13.500 1l-5 6-1 2.500L10 8.500l4-5.500" /></Icon>
        </StatusButton>
        <StatusText>Inglés (Estados Unidos)</StatusText>
        <StatusEnd>
          <StatusButton>
            <Icon w={11} h={10}><path d="M0 4.500h11M0 7h11M0 9.500h7" /><path d="M2.500 3h6L5.500 0z" fill="currentColor" stroke="none" /></Icon>
            Notas
          </StatusButton>
          <StatusButton $left={19}>
            <Icon w={12} h={11}><path d="M0 0h12v8H6.500L3.500 11V8H0z" fill="currentColor" stroke="none" /></Icon>
            Comentarios
          </StatusButton>
          <StatusButton aria-label="Vista normal" $active $width={35} $left={19}>
            <Icon w={13} h={12}><path d="M.5.5h12v11H.5zM3.500.5v11M5.500 2.500h5v4h-5zM5 9h6M.5 3h3M.5 6h3M.5 9h3" /></Icon>
          </StatusButton>
          <StatusButton aria-label="Clasificador" $width={36}>
            <Icon w={13} h={12}><path d="M.5.5h4.500v4H.5zM8 .5h4.500v4H8zM.5 7.500h4.500v4H.5zM8 7.500h4.500v4H8z" /></Icon>
          </StatusButton>
          <StatusButton aria-label="Vista de lectura" $width={35}>
            <Icon w={13} h={12}><path d="M.5.5C3 .5 5 .5 6.500 2 8 .5 10 .5 12.500.5V10C10 10 8 10 6.500 11.500 5 10 3 10 .5 10zM6.500 2v9.500M2 3h3M2 5h3M2 7h3M8 3h3M8 5h3M8 7h3" /></Icon>
          </StatusButton>
          <StatusButton aria-label="Presentación" $width={36}>
            <Icon w={13} h={12}><path d="M0 1h13M1.500 1v5.500h10V1M6.500 6.500V11M4 11.500h5M3.500 3.500h6" /></Icon>
          </StatusButton>
          <StatusButton aria-label="Alejar" $width={15}>
            <Icon w={6} h={2}><path d="M0 0h6v2H0z" fill="currentColor" stroke="none" /></Icon>
          </StatusButton>
          <ZoomRange type="range" min={10} max={150} defaultValue={59} aria-label="Zoom" />
          <StatusButton aria-label="Acercar" $width={16}>
            <Icon w={8} h={8} sw={2}><path d="M0 4h8M4 0v8" /></Icon>
          </StatusButton>
          <StatusButton $width={38}>73 %</StatusButton>
          <StatusButton aria-label="Ajustar a la ventana" $width={26}>
            <Icon w={12} h={12}><path d="M.5.5h11v11H.5zM6 1.500v3M4.500 3 6 1.500 7.500 3M6 10.500v-3M4.500 9 6 10.500 7.500 9M1.500 6h3M10.500 6h-3" /></Icon>
          </StatusButton>
        </StatusEnd>
      </StatusBar>
    </Screen>
  );
}
